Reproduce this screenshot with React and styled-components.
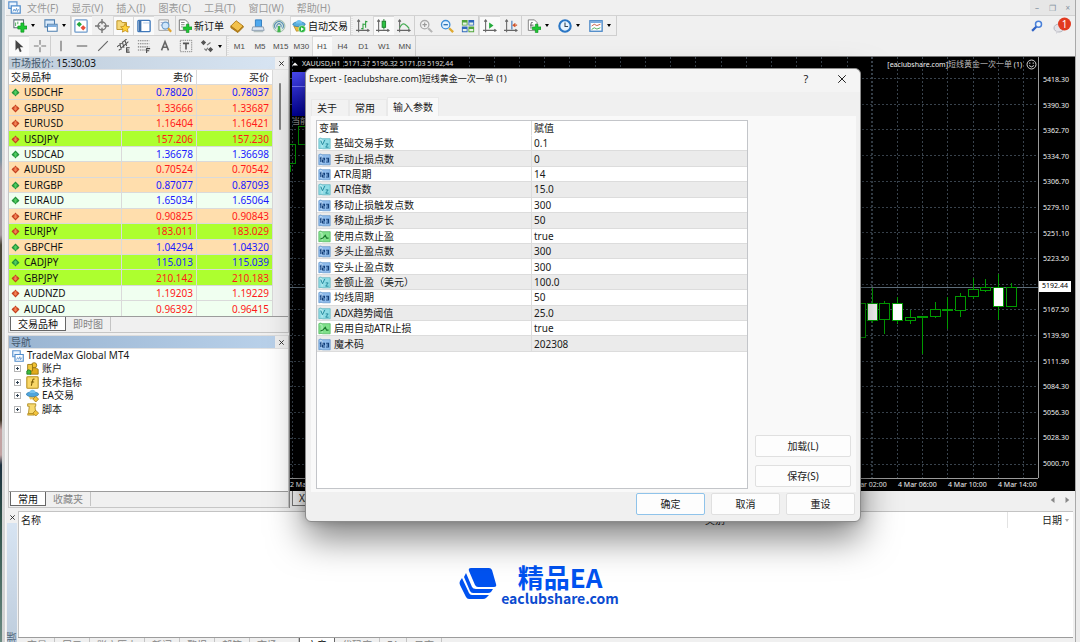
import React from "react";
import styled, { createGlobalStyle, css } from "styled-components";

const sans = `"Noto Sans", "Noto Sans CJK SC", sans-serif`;

const GlobalStyle = createGlobalStyle`
  * { box-sizing: border-box; }
  body { margin: 0; overflow: hidden; background: #f0f0f0; font: 10px/14px ${sans}; color: #1a1a1a; }
  button { appearance: none; margin: 0; padding: 0; border: 0; background: none; font: inherit; color: inherit; white-space: nowrap; }
  table { border-collapse: separate; border-spacing: 0; }
  svg { display: block; flex: none; }
`;

const Desktop = styled.div`
  display: grid;
  grid-template-columns: 2px 4px minmax(0, 1fr) 5px;
  min-height: 100vh;
`;
const Wallpaper = styled.div`
  background: linear-gradient(#7d95a3 0 160px, #a79aa2 170px 235px, #4a4638 245px 300px, #3d3526 420px, #c2a3a3 430px 455px, #1c3140 465px, #2f5148 520px, #6f8f86);
`;
const WindowEdge = styled.div`
  background: linear-gradient(#c9d5de, #dcdcdc 80px, #d2d2d2);
  border-right: 1px solid #f7f7f7;
`;
const RightEdge = styled.div`
  background: #ececec;
  border-left: 1px solid #a9a9a9;
`;
const Window = styled.div`
  min-width: 0;
  background: #f0f0f0;
`;

/* menu and tool bars */
const MenuBar = styled.nav`
  display: flex;
  align-items: center;
  gap: 13px;
  height: 16px;
  padding-left: 2px;
  border-bottom: 1px solid #d2d2d2;
  color: #999;
`;
const WindowControls = styled.div`
  display: flex;
  justify-content: space-around;
  width: 45px;
  height: 15px;
  margin-left: auto;
  background: #e6e6e6;
  color: #8593a2;
  font-size: 8px;
`;
const ToolRow = styled.div`
  display: flex;
  align-items: stretch;
  height: 20px;
  padding-left: 2px;
`;
const ToolStrip = styled.div`
  display: flex;
  border: solid #cfcfcf;
  border-width: 0 1px ${(p) => (p.$line ? "1px" : "0")} 0;
`;
const Group = styled.div`
  display: flex;
  width: ${(p) => p.$w}px;
  border-right: ${(p) => (p.$sep ? "1px solid #cfcfcf" : "0")};
`;
const Grip = styled.div`
  width: ${(p) => p.$w}px;
  background: repeating-linear-gradient(#e3e3e3 0 1px, #f4f4f4 1px 2px);
  border-left: 1px solid #cfcfcf;
`;
const ToolButton = styled.button`
  flex: 1 1 0;
  min-width: 0;
  display: flex;
  align-items: center;
  justify-content: center;
  gap: ${(p) => p.$gap || 3}px;
  color: #111;
  ${(p) => p.$on && css`background: #fafafa; box-shadow: inset 1px 1px #d9d9d9;`}
`;
const WideButton = styled(ToolButton)`
  flex: 0 0 ${(p) => p.$w}px;
`;
const Timeframe = styled(ToolButton)`
  font: 8px "Liberation Sans", sans-serif;
  color: #4a4a4a;
`;
const Caret = styled.span`
  border: solid transparent;
  border-width: 3px 2px 0;
  border-top-color: ${(p) => p.$color || "#000"};
`;
const ToolEnd = styled.div`
  display: flex;
  align-items: center;
  gap: 10px;
  margin-left: auto;
  padding-right: 3px;
`;

/* work space */
const Workspace = styled.div`
  display: grid;
  grid-template-columns: 283px minmax(0, 1fr);
`;
const SideColumn = styled.div`
  display: flex;
  flex-direction: column;
  gap: 2px;
  padding-left: 2px;
`;
const Panel = styled.section`
  display: flex;
  flex-direction: column;
  border: 1px solid #c6c6c6;
  border-top-color: #dcdcdc;
  padding-bottom: 1px;
`;
const PanelHead = styled.header`
  display: flex;
  align-items: center;
  height: 13px;
  border-bottom: 1px solid #e2e2e2;
`;
const PanelTitle = styled.div`
  flex: 1;
  height: 12px;
  padding-left: 2px;
  line-height: 12px;
  color: #44586c;
  background: ${(p) => (p.$active ? "linear-gradient(90deg, #99b4d1, #b9d1ea)" : "linear-gradient(90deg, #bfcddb, #d7e4f2)")};
  b { font-weight: 400; color: #111; }
`;
const CloseButton = styled.button`
  width: 13px;
  height: 12px;
  display: grid;
  place-items: center;
`;
const Scroller = styled.div`
  display: grid;
  grid-template-columns: minmax(0, 1fr) 15px;
  height: 246px;
  overflow: hidden;
`;
const ScrollTrack = styled.div`
  padding: 13px 6px;
  &::before { content: ""; display: block; width: 2px; height: 47px; border-radius: 1px; background: #858585; }
`;
const QuoteTable = styled.table`
  width: 100%;
  height: 247px;
  table-layout: fixed;
  line-height: 13px;
  background: #fff;
  th, td { padding: 1px 3px 0 2px; text-align: right; font-weight: 400; border-bottom: 1px solid #dadada; border-right: 1px solid #dadada; }
  th:first-child, td:first-child { text-align: left; width: 113px; }
  th:nth-child(2) { width: 75px; }
`;
const QuoteRow = styled.tr`
  background: ${(p) => p.$bg};
  td { color: ${(p) => (p.$up ? "#1a1aff" : "#ff1a1a")}; }
  td:first-child { color: #111; }
`;
const WithIcon = styled.span`
  display: flex;
  align-items: center;
  gap: ${(p) => p.$gap || 3}px;
`;
const TabStrip = styled.div`
  display: flex;
  height: 15px;
  padding-left: 1px;
  border-top: 1px solid #9c9c9c;
`;
const PanelTab = styled.button`
  height: 14px;
  padding: 0 7px;
  line-height: 12px;
  color: ${(p) => (p.$on ? "#111" : "#858585")};
  ${(p) => p.$on
    ? css`background: #fff; border: 1px solid #666; border-top: 0;`
    : css`border-right: 1px solid #c4c4c4;`}
`;
const Tree = styled.ul`
  display: flex;
  flex-direction: column;
  height: 142px;
  margin: 0;
  padding: 0 0 0 3px;
  background: #fff;
  line-height: 13px;
  list-style: none;
`;
const TreeItems = styled.ul`
  display: grid;
  grid-auto-rows: 1fr;
  height: 54px;
  margin: 0;
  padding: 0 0 0 2px;
  list-style: none;
`;
const Expander = styled.button`
  width: 7px;
  height: 7px;
  margin-right: 2px;
  border: 1px solid #b5b5b5;
  background: linear-gradient(#345, #345) center / 3px 1px no-repeat, linear-gradient(#345, #345) center / 1px 3px no-repeat, #fff;
`;

/* chart */
const ChartColumn = styled.div`
  min-width: 0;
  border-left: 1px solid #8b8b8b;
`;
const ChartPane = styled.div`
  position: relative;
  display: grid;
  grid-template-columns: minmax(0, 1fr) 37px;
  grid-template-rows: 421px 13px;
  background: #000;
  border-top: 1px solid #777;
  color: #f0f0f0;
  font-size: 7px;
  line-height: 10px;
`;
const ChartSvg = styled.svg`
  grid-area: 1 / 1;
  width: 100%;
  height: 421px;
`;
const ChartHead = styled.div`
  grid-area: 1 / 1;
  display: flex;
  align-items: center;
  gap: 4px;
  height: 14px;
  padding: 0 1px 0 2px;
  white-space: pre;
  z-index: 1;
  span:last-of-type { margin-left: auto; }
  small { font-size: 8px; color: #bbb; }
`;
const PriceAxis = styled.div`
  display: flex;
  flex-direction: column;
  justify-content: space-between;
  padding: 18px 0 9px 4px;
  border-left: 1px solid #9a9a9a;
`;
const PriceBadge = styled.div`
  position: absolute;
  right: 4px;
  top: 224px;
  width: 32px;
  height: 11px;
  padding-left: 3px;
  background: #fff;
  color: #000;
`;
const TimeAxis = styled.div`
  display: flex;
  justify-content: flex-end;
  border-top: 1px solid #9a9a9a;
  line-height: 12px;
  white-space: nowrap;
  span { flex: 0 0 50px; }
  span:first-child { margin-right: auto; }
  span:last-child { flex-basis: 40px; }
`;
const ChartTabs = styled.div`
  display: flex;
  height: 17px;
  padding-left: 2px;
`;
const ChartTab = styled.button`
  height: 15px;
  padding: 0 6px;
  background: #fafafa;
  border: 1px solid #777;
  border-top: 0;
`;
const TabArrows = styled.div`
  display: flex;
  gap: 8px;
  margin-left: auto;
  padding-right: 5px;
`;

/* terminal */
const Terminal = styled.section`
  display: grid;
  grid-template-columns: 12px minmax(0, 1fr);
  padding: 3px 2px 0 0;
`;
const TerminalSide = styled.div`
  display: flex;
  flex-direction: column;
`;
const TerminalTitle = styled.div`
  flex: 1;
  width: 10px;
  margin-left: 1px;
  writing-mode: vertical-rl;
  transform: rotate(180deg);
  line-height: 10px;
  color: #53687c;
  background: linear-gradient(#bccbdb, #d7e4f2);
`;
const Articles = styled.div`
  height: 126px;
  background: #fff;
  border: solid #c3c3c3;
  border-width: 1px 0 0 1px;
`;
const ArticleHead = styled.div`
  display: grid;
  grid-template-columns: 684px minmax(0, 1fr) 66px;
  height: 16px;
  padding-left: 2px;
  line-height: 16px;
`;
const DateHead = styled.span`
  display: flex;
  justify-content: flex-end;
  align-items: center;
  gap: 3px;
  padding-right: 4px;
  border-left: 1px solid #e3e3e3;
`;
const Brand = styled.div`
  display: flex;
  align-items: center;
  justify-content: center;
  gap: 4px;
  margin: 35px 14px 0 0;
  color: #0052f0;
  font-family: "Noto Sans CJK SC", sans-serif;
  font-weight: 700;
  text-align: center;
`;
const BrandName = styled.div`
  font-size: 26px;
  line-height: 28px;
`;
const BrandSite = styled.div`
  font-size: 14px;
  line-height: 14px;
  color: #0b4bd0;
`;
const TerminalTabs = styled(TabStrip)`
  padding-left: 2px;
`;
const TerminalTab = styled(PanelTab)`
  padding-right: ${(p) => (p.$wide ? 21 : 7)}px;
`;

/* dialog */
const Dialog = styled.div`
  position: absolute;
  left: 305px;
  top: 68px;
  width: 556px;
  border: 1px solid #8c8c8c;
  border-radius: 6px;
  background: #f0f0f0;
  box-shadow: 0 16px 36px rgba(0, 0, 0, 0.5), 0 0 8px rgba(0, 0, 0, 0.2);
  z-index: 5;
`;
const DialogHead = styled.header`
  display: flex;
  align-items: center;
  height: 23px;
  padding: 0 0 3px 3px;
  border-radius: 6px 6px 0 0;
  background: #f4f4f4;
  font-size: 9px;
  h1 { flex: 1; margin: 0; font: inherit; }
  button { width: 36px; height: 20px; display: grid; place-items: center; font-size: 11px; }
`;
const DialogTabs = styled.div`
  display: flex;
  align-items: flex-end;
  height: 24px;
  padding-left: 5px;
`;
const DialogTab = styled.button`
  height: ${(p) => (p.$on ? 19 : 17)}px;
  padding: 0 ${(p) => (p.$on ? 5 : 11)}px 0 5px;
  border: 1px solid #e9e9e9;
  border-bottom: 0;
  background: ${(p) => (p.$on ? "#f9f9f9" : "#f2f2f2")};
`;
const DialogPage = styled.div`
  display: grid;
  grid-template-columns: minmax(0, 1fr) 96px;
  gap: 7px;
  margin: 0 4px 0 5px;
  padding: 4px 5px 3px;
  background: #f9f9f9;
`;
const InputList = styled.div`
  height: 369px;
  background: #fff;
  border: 1px solid #c3c5c9;
`;
const InputTable = styled.table`
  width: 100%;
  height: 231px;
  table-layout: fixed;
  line-height: 13px;
  th, td { padding: 1px 2px 0 1px; text-align: left; font-weight: 400; border-bottom: 1px solid #dcdcdc; border-right: 1px solid #dcdcdc; }
  th { border-bottom-color: #fff; padding-left: 2px; }
  th:first-child { width: 215px; }
  td:last-child, th:last-child { border-right: 0; padding-left: 2px; }
  tbody tr:nth-child(even) { background: #ebebeb; }
`;
const SideButtons = styled.div`
  display: flex;
  flex-direction: column;
  justify-content: flex-end;
  gap: 8px;
  padding-bottom: 2px;
`;
const PushButton = styled.button`
  min-width: 69px;
  height: 22px;
  border: 1px solid ${(p) => (p.$main ? "#8fc3ea" : "#e0e0e0")};
  border-radius: 2px;
  background: #fdfdfd;
`;
const DialogFoot = styled.footer`
  display: flex;
  justify-content: flex-end;
  gap: 6px;
  padding: 1px 5px 6px;
`;

/* icons: one 16 by 16 drawing each */
const plus = <path d="M8.5 6h3v3h3v3h-3v3h-3v-3h-3V9h3z" fill="#1cc832" stroke="#0b8a1c" strokeWidth=".8" />;
const axes = <path d="M3 1v14M0 13h15M1.500 3 3 1l1.500 2M13 11.500l2 1.500-2 1.500" fill="none" stroke="#666" strokeWidth="1.200" />;
const sheet = (c, d) => (
  <>
    <path d="M1 2q2-1.500 4 0h10v12.500H6q-2-1-5 0z" fill={c} stroke={d} strokeWidth=".8" />
    <path d="M2 3.500q2-1 3 .5v9" fill="none" stroke="#fff" opacity=".6" />
  </>
);
const art = {
  app: <><path d="M1 1h10v8H1z" fill="#eaf4ff" stroke="#5b93cf" strokeWidth="1.500" /><path d="M4 6h11v9H4z" fill="#fff" stroke="#4d8bcb" strokeWidth="1.500" /><path d="M6 13l1.500-3 1.500 2.500L10.500 9l1 4 1.500-3" fill="none" stroke="#4d8bcb" /></>,
  newChart: <><path d="M1 1h11v9H1z" fill="#fff" stroke="#5e6f7a" strokeWidth="1.200" /><path d="M3 4v4M5.500 3v3" stroke="#3aa04a" /><path d="M9 4.500h3.500V8H16v3.500h-3.500V15H9v-3.500H5.500V8H9z" fill="#1cc832" stroke="#0b8a1c" strokeWidth=".7" /></>,
  profiles: <><path d="M1 1h11v8H1z" fill="#dcebfa" stroke="#4d7fb0" strokeWidth="1.200" /><path d="M4 6h11v8H4z" fill="#fff" stroke="#4d7fb0" strokeWidth="1.200" /><path d="M4.500 7h10v2h-10z" fill="#6fa5dc" /></>,
  market: <><rect x="1" y="1" width="14" height="14" rx="1" fill="#fff" stroke="#6e9bcb" strokeWidth="1.500" /><path d="M6 3l3 3-3 3-3-3z" fill="#22a83c" /><path d="M10.500 7l3 3-3 3-3-3z" fill="#e8503a" /></>,
  target: <><circle cx="8" cy="8" r="4.500" fill="none" stroke="#777" strokeWidth="1.600" /><path d="M8 0v6M8 10v6M0 8h6M10 8h6" stroke="#777" strokeWidth="1.600" /></>,
  favourites: <><path d="M1 2h5l1 2h5v8H1z" fill="#f5d87a" stroke="#b98d1c" /><path d="M10.500 5l1.600 3.400 3.600.5-2.600 2.500.7 3.600-3.300-1.700-3.200 1.700.6-3.600-2.600-2.500 3.700-.5z" fill="#ffd23a" stroke="#b98211" strokeWidth=".8" /></>,
  navigator: <><rect x="1" y="1.500" width="14" height="13" rx="1" fill="#fff" stroke="#3f78ba" strokeWidth="1.500" /><path d="M2 2h3v12H2z" fill="#3b6ea8" /><path d="M7 4.500h7" stroke="#a9c6e6" /></>,
  tester: <><path d="M1 1h11v12H1z" fill="#f7f7f7" stroke="#999" /><path d="M3 4h6M3 7h4" stroke="#aac" /><circle cx="8.500" cy="7.500" r="4" fill="#cfe6fb" stroke="#6d9cc9" strokeWidth="1.300" /><path d="M11.500 10.500l3.500 4" stroke="#e0a32e" strokeWidth="2.400" /></>,
  order: <><path d="M1.500 1h7l3 3v9h-10z" fill="#fff" stroke="#666" /><path d="M3.500 4h4M3.500 6.500h4M3.500 9h2" stroke="#777" /><path d="M9.500 6h3v3H16v3h-3.500v3.500h-3V12H6V9h3.500z" fill="#1cc832" stroke="#0b8a1c" strokeWidth=".7" /></>,
  book: <><path d="M1 8v2l8 5.500 6-6V8l-6 6z" fill="#c8871a" stroke="#a0700f" /><path d="M1 8l6-6 8 6-6 6z" fill="#f2c14b" stroke="#a97513" /></>,
  hosting: <><path d="M5 1h7v8H5z" fill="#4fa9ee" stroke="#2878bd" /><path d="M2 9h12l1 4H1z" fill="#dde7f2" stroke="#8799ad" /><path d="M3 14.500h11" stroke="#9aa" /></>,
  signal: <><circle cx="8" cy="8" r="6.800" fill="#dceadf" stroke="#9db8a6" /><path d="M4 11a5 5 0 1 1 8 0M6 9.500a2.500 2.500 0 1 1 4 0" fill="none" stroke="#5b8fb5" strokeWidth="1.300" /><path d="M7 8h2l1 7H6z" fill="#43b54d" /></>,
  auto: <><path d="M2 8l3 6 7-1 2-6z" fill="#e9b93d" stroke="#a87d18" strokeWidth=".7" /><ellipse cx="8" cy="6" rx="7" ry="2.800" fill="#58aede" stroke="#2b78ac" strokeWidth=".8" /><path d="M4.500 5q0-4 3.500-4t3.500 4z" fill="#75c2ee" /><circle cx="11.500" cy="11.500" r="4" fill="#25b53b" stroke="#fff" strokeWidth=".6" /><path d="M10.300 9.300v4.400l3.400-2.200z" fill="#fff" /></>,
  bars: <>{axes}<path d="M8 5v7M6 11h2M11 2v8M11 3h2M8 6h3" stroke="#2b9e3c" strokeWidth="1.200" /></>,
  candles: <>{axes}<path d="M9 0v12" stroke="#197b27" /><rect x="7" y="2.500" width="4" height="7" fill="#2cc343" stroke="#197b27" /></>,
  line: <>{axes}<path d="M3 10q3-6 6-4t5 5" fill="none" stroke="#45ab53" strokeWidth="1.300" /></>,
  zoomIn: <><circle cx="6.500" cy="6.500" r="4.800" fill="#f1f1f1" stroke="#aaa" strokeWidth="1.500" /><path d="M4 6.500h5M6.500 4v5" stroke="#999" strokeWidth="1.300" /><path d="M10.500 10.500l4.500 4.500" stroke="#b5b5b5" strokeWidth="2.400" /></>,
  zoomOut: <><circle cx="6.500" cy="6.500" r="4.800" fill="#e2f2ff" stroke="#3d8ed6" strokeWidth="1.500" /><path d="M4 6.500h5" stroke="#2a70b0" strokeWidth="1.500" /><path d="M10.500 10.500l4.500 4.500" stroke="#dfa92f" strokeWidth="2.600" /></>,
  tile: <><path d="M1 1h6.500v6.500H1zM8.500 8.500H15V15H8.500z" fill="#4fa43a" /><path d="M8.500 1H15v6.500H8.500zM1 8.500h6.500V15H1z" fill="#2f67bd" /><path d="M2 4h4.500v2.500H2zM9.500 4H14v2.500H9.500zM2 11.500h4.500V14H2zM9.500 11.500H14V14H9.500z" fill="#e6f2e6" /></>,
  scroll: <>{axes}<path d="M7 4v7l5-3.500z" fill="#25ab3c" /></>,
  shift: <>{axes}<path d="M9 2v10" stroke="#3f78ba" strokeWidth="1.300" /><path d="M15 7h-4M13 5l-2.500 2L13 9" fill="none" stroke="#d0542a" strokeWidth="1.400" /></>,
  indicator: <><path d="M1.500 1h7l3 3v9h-10z" fill="#fff" stroke="#777" /><path d="M6.500 4q-2-1-2 2v5M3.500 7h4" fill="none" stroke="#555" /><path d="M9.500 6h3v3H16v3h-3.500v3.500h-3V12H6V9h3.500z" fill="#1cc832" stroke="#0b8a1c" strokeWidth=".7" /></>,
  clock: <><circle cx="8" cy="8" r="6.500" fill="#e8f4ff" stroke="#2a76c4" strokeWidth="2.400" /><path d="M8 4v4.500h3.500" fill="none" stroke="#345" strokeWidth="1.200" /></>,
  template: <><rect x="1" y="2" width="14" height="12" fill="#fff" stroke="#4785c6" strokeWidth="1.500" /><path d="M1.500 2.500h13v2h-13z" fill="#6fa5dc" /><path d="M3 8l3-2 3 1.500L13 6" fill="none" stroke="#c0503a" /><path d="M3 12l3-2 3 1.500L13 10" fill="none" stroke="#3ca34c" /></>,
  cursor: <path d="M4 1v12l3-3 2 5 2-1-2-4.500h4z" fill="#444" />,
  cross: <path d="M8 1v5.500M8 9.500V15M1 8h5.500M9.500 8H15" stroke="#777" strokeWidth="1.300" />,
  vline: <path d="M8 2v12" stroke="#666" strokeWidth="1.300" />,
  hline: <path d="M2 8h12" stroke="#666" strokeWidth="1.300" />,
  trend: <path d="M2.500 13.500l11-11" stroke="#666" strokeWidth="1.300" />,
  channel: <><path d="M0 9L11 0M2 13L13 3M3 5l2 7M6 3l2 7M9 1l2 7" stroke="#555" strokeWidth="1.200" /><path d="M14.500 10H11v5h3.500M11 12.500h3" fill="none" stroke="#444" strokeWidth="1.200" /></>,
  fib: <><path d="M1 2h13M1 5.500h13M1 9h13M1 12.500h9" stroke="#777" strokeDasharray="1.500 1" strokeWidth="1.200" /><path d="M11 16v-5h4M11 13.500h3" fill="none" stroke="#444" strokeWidth="1.200" /></>,
  letter: <path d="M4 13L8 3l4 10M5.500 9.500h5" fill="none" stroke="#666" strokeWidth="1.800" />,
  label: <><rect x="1.500" y="1.500" width="13" height="13" fill="none" stroke="#777" strokeDasharray="1.500 1" /><path d="M4.500 5h7M8 5v7" stroke="#555" strokeWidth="1.800" /></>,
  arrows: <><path d="M4 1l3 3-3 3-3-3zM12 9l3 3-3 3-3-3z" fill="#555" /><path d="M5 11l2 2 2-3M8 7l4-3" fill="none" stroke="#777" strokeWidth="1.400" /></>,
  up: <><path d="M8 1l7 7-3 3.500H11L8 15l-3-3.500H4L1 8z" fill="#23913a" /><path d="M8 4l4 4H9.800v4H6.200V8H4z" fill="#52d162" /></>,
  down: <><path d="M8 15l7-7-3-3.500H11L8 1 5 4.500H4L1 8z" fill="#c4401f" /><path d="M8 12l4-4H9.800V4H6.200v4H4z" fill="#f58556" /></>,
  accounts: <><circle cx="10" cy="4" r="3.200" fill="#f1c232" stroke="#94700c" /><path d="M5 15V9q5-4 10 0v6z" fill="#e0ab1c" stroke="#94700c" /><path d="M2 3h6v8H2z" fill="#f0c840" stroke="#94700c" /><path d="M1 15v-4q2-3 5 0v4z" fill="#3bbb3f" stroke="#237a27" /></>,
  fx: <><rect x="1" y="1" width="14" height="14" rx="1" fill="#f9d767" stroke="#b68f1c" strokeWidth="1.300" /><path d="M10.500 4q-2-1-2.500 2l-1.500 6M6 7.500h4" fill="none" stroke="#7b5c06" strokeWidth="1.300" /></>,
  expert: <><path d="M3 8l2 5 6-1 2-5z" fill="#e9c25a" /><ellipse cx="8" cy="6.500" rx="7.500" ry="3" fill="#4fa5dc" stroke="#2b78ac" strokeWidth=".8" /><path d="M4.500 5q0-4 3.500-4t3.500 4z" fill="#75c2ee" /><path d="M12 9l3.500 3.500L12 16l-3.500-3.500z" fill="#f3c53c" stroke="#a87d18" /></>,
  script: <><path d="M2 1h10v3h-1l1 9H3l1-9H2z" fill="#f7d970" stroke="#a98519" /><path d="M2 13h8v2H2z" fill="#e9bc40" stroke="#a98519" strokeWidth=".7" /><path d="M12 9l3.500 3.500L12 16l-3.500-3.500z" fill="#f3c53c" stroke="#a87d18" /></>,
  int: <>{sheet("#8fbcec", "#5a8fc7")}<path d="M2.500 7l1-1v5M5.500 6.500h2.500v2H5.500v2.500H8.500M10 6.500h3v4.500h-3M10.500 8.700H13" fill="none" stroke="#123e78" strokeWidth="1.300" /></>,
  double: <>{sheet("#8edce5", "#54aebb")}<path d="M3.500 4.500l2 5 3-6M9.500 8.500h3l-3 4h3.500" fill="none" stroke="#258a9d" strokeWidth="1.200" /></>,
  bool: <>{sheet("#7fe08a", "#46ae54")}<path d="M3 11l3-1 3-3.500 1.500 3.500H13" fill="none" stroke="#18752a" strokeWidth="1.400" /></>,
  search: <><circle cx="10" cy="5.500" r="4" fill="#eef6ff" stroke="#4a80d8" strokeWidth="2" /><path d="M7 9l-5.500 5.500" stroke="#2f62c4" strokeWidth="3" /></>,
  x: <path d="M3 3l10 10M13 3L3 13" stroke="#222" strokeWidth="2" fill="none" />,
  bigX: <path d="M2 2l12 12M14 2L2 14" stroke="#222" strokeWidth="1.600" fill="none" />,
  tri: <path d="M0 12L8 4l8 8z" fill="#fff" />,
  left: <path d="M12 0v16L2 8z" fill="#888" />,
  right: <path d="M4 0v16l10-8z" fill="#888" />,
  face: <><circle cx="8" cy="8" r="6.500" fill="none" stroke="#ddd" strokeWidth="1.400" /><path d="M5.500 5v2M10.500 5v2M4.500 9.500q3.500 4 7 0" fill="none" stroke="#ddd" strokeWidth="1.400" /></>,
};
const Icon = ({ name, size = 14 }) => (
  <svg width={size} height={size} viewBox="0 0 16 16" aria-hidden="true">{art[name]}</svg>
);
const ChatIcon = () => (
  <svg width="19" height="18" viewBox="0 0 19 18" aria-hidden="true">
    <ellipse cx="6" cy="11" rx="5" ry="4" fill="#e3e3e8" stroke="#b5b5bd" />
    <path d="M3 14v3l3-2.500" fill="#d5d5dc" />
    <circle cx="11.500" cy="7" r="6.500" fill="#e23a20" />
    <text x="11.500" y="10.500" textAnchor="middle" fontSize="10" fill="#fff">1</text>
  </svg>
);

const menus = ["文件(F)", "显示(V)", "插入(I)", "图表(C)", "工具(T)", "窗口(W)", "帮助(H)"];
const timeframes = ["M1", "M5", "M15", "M30", "H1", "H4", "D1", "W1", "MN"];

const peach = "#ffdead";
const lime = "#adff2f";
const mint = "#f0fff0";
const quotes = [
  ["USDCHF", "0.78020", "0.78037", 1, peach],
  ["GBPUSD", "1.33666", "1.33687", 0, peach],
  ["EURUSD", "1.16404", "1.16421", 0, peach],
  ["USDJPY", "157.206", "157.230", 0, lime],
  ["USDCAD", "1.36678", "1.36698", 1, mint],
  ["AUDUSD", "0.70524", "0.70542", 0, peach],
  ["EURGBP", "0.87077", "0.87093", 1, peach],
  ["EURAUD", "1.65034", "1.65064", 1, mint],
  ["EURCHF", "0.90825", "0.90843", 0, peach],
  ["EURJPY", "183.011", "183.029", 0, lime],
  ["GBPCHF", "1.04294", "1.04320", 1, peach],
  ["CADJPY", "115.013", "115.039", 1, lime],
  ["GBPJPY", "210.142", "210.183", 0, lime],
  ["AUDNZD", "1.19203", "1.19229", 0, mint],
  ["AUDCAD", "0.96392", "0.96415", 0, mint],
];
const treeItems = [["accounts", "账户"], ["fx", "技术指标"], ["expert", "EA交易"], ["script", "脚本"]];
const inputs = [
  ["double", "基础交易手数", "0.1"],
  ["int", "手动止损点数", "0"],
  ["int", "ATR周期", "14"],
  ["double", "ATR倍数", "15.0"],
  ["int", "移动止损触发点数", "300"],
  ["int", "移动止损步长", "50"],
  ["bool", "使用点数止盈", "true"],
  ["int", "多头止盈点数", "300"],
  ["int", "空头止盈点数", "300"],
  ["double", "金额止盈（美元）", "100.0"],
  ["int", "均线周期", "50"],
  ["double", "ADX趋势阈值", "25.0"],
  ["bool", "启用自动ATR止损", "true"],
  ["int", "魔术码", "202308"],
];
const prices = ["5418.30", "5390.30", "5362.70", "5334.70", "5306.70", "5279.10", "5251.10", "5223.50", "5195.10", "5167.50", "5139.90", "5111.90", "5084.30", "5056.30", "5028.30", "5000.70"];
const terminalTabs = ["交易", "展示", "账户历史", "新闻", "警报", "邮箱", "市场", "文章", "代码库", "EA", "日志"];

/* candles: x, wick top, body top, body bottom, wick bottom, filled */
const candles = [
  [860, 303, 303, 337, 337, 0],
  [872, 288, 303, 320, 323, 1],
  [884, 301, 303, 319, 334, 0],
  [897, 297, 303, 320, 324, 1],
  [910, 310, 317, 320, 324, 0],
  [922, 316, 316, 317, 354, 0],
  [935, 302, 309, 316, 318, 0],
  [947, 297, 309, 310, 329, 0],
  [960, 293, 296, 310, 317, 0],
  [973, 278, 289, 296, 299, 0],
  [985, 279, 287, 290, 292, 0],
  [998, 274, 287, 306, 320, 1],
  [1011, 283, 287, 306, 307, 0],
];

function Chart() {
  const columns = Array.from({ length: 30 }, (_, i) => Math.round(1023 - i * 25.2));
  const rows = prices.map((_, i) => Math.round(79 + i * 25.7));
  return (
    <ChartSvg viewBox="290 57 748 421" preserveAspectRatio="xMaxYMin meet" shapeRendering="crispEdges">
      <g stroke="#39434d" strokeDasharray="2 2">
        {columns.map((x) => <path key={x} d={`M${x + 0.5} 57V478`} />)}
        {rows.map((y) => <path key={y} d={`M290 ${y - 0.5}H1038`} />)}
        <path d="M871.500 57V478" />
      </g>
      <path d="M290 287.500H1038" stroke="#5d6d7a" />
      <g stroke="#009a00" fill="#000">
        <path d="M290 144.500h5.500v19H290M290.500 165v7M306 126.500h-7.500v18h7" fill="none" />
        {candles.map(([x, wt, bt, bb, wb, filled]) => (
          <g key={x}>
            <path d={`M${x + 0.5} ${wt}V${wb}`} />
            <rect x={x - 4.5} y={bt + 0.5} width="10" height={bb - bt} fill={filled ? "#fff" : "#000"} />
          </g>
        ))}
      </g>
      <defs>
        <linearGradient id="sell" x2="0" y2="1"><stop stopColor="#4a4af0" /><stop offset="1" stopColor="#0000a0" /></linearGradient>
      </defs>
      <rect x="292" y="72" width="40" height="44" fill="url(#sell)" />
      <path d="M292 86.500h40" stroke="#7c7cff" />
      <text x="292" y="124" fontSize="8" fill="#bbb">当前</text>
    </ChartSvg>
  );
}

function Drop({ name, label }) {
  return <ToolButton aria-label={label} $gap={4}><Icon name={name} /><Caret /></ToolButton>;
}
function Tools({ names, on = [] }) {
  return names.map((n) => <ToolButton key={n} aria-label={n} $on={on.includes(n)}><Icon name={n} /></ToolButton>);
}

function Toolbars() {
  return (
    <>
      <ToolRow>
        <ToolStrip $line>
          <Group $w={63} $sep><Drop name="newChart" label="新图表" /><Drop name="profiles" label="配置" /></Group>
          <Group $w={105} $sep><Tools names={["market", "target", "favourites", "navigator", "tester"]} on={["market", "favourites", "navigator"]} /></Group>
          <Group $w={174}>
            <WideButton $w={50} $gap={2}><Icon name="order" />新订单</WideButton>
            <Tools names={["book", "hosting", "signal"]} />
            <WideButton $w={60} $gap={2} $on><Icon name="auto" />自动交易</WideButton>
          </Group>
          <Grip $w={3} />
          <Group $w={62} $sep><Tools names={["bars", "candles", "line"]} on={["candles"]} /></Group>
          <Group $w={64} $sep><Tools names={["zoomIn", "zoomOut", "tile"]} /></Group>
          <Group $w={43} $sep><Tools names={["scroll", "shift"]} on={["scroll"]} /></Group>
          <Group $w={94}><Drop name="indicator" label="指标" /><Drop name="clock" label="周期" /><Drop name="template" label="模板" /></Group>
        </ToolStrip>
        <ToolEnd><Icon name="search" size={12} /><ChatIcon /></ToolEnd>
      </ToolRow>
      <ToolRow>
        <ToolStrip>
          <Group $w={43} $sep><Tools names={["cursor", "cross"]} on={["cursor"]} /></Group>
          <Group $w={145}><Tools names={["vline", "hline", "trend", "channel", "fib", "letter", "label"]} /></Group>
          <Group $w={30}><Drop name="arrows" label="箭头" /></Group>
          <Grip $w={3} />
          <Group $w={186}>{timeframes.map((t) => <Timeframe key={t} $on={t === "H1"}>{t}</Timeframe>)}</Group>
        </ToolStrip>
      </ToolRow>
    </>
  );
}

function MarketWatch() {
  return (
    <Panel>
      <PanelHead><PanelTitle>市场报价: <b>15:30:03</b></PanelTitle><CloseButton aria-label="关闭"><Icon name="x" size={7} /></CloseButton></PanelHead>
      <Scroller>
        <QuoteTable>
          <thead><tr><th>交易品种</th><th>卖价</th><th>买价</th></tr></thead>
          <tbody>
            {quotes.map(([s, bid, ask, up, bg]) => (
              <QuoteRow key={s} $bg={bg} $up={up}>
                <td><WithIcon $gap={4}><Icon name={up ? "up" : "down"} size={9} />{s}</WithIcon></td><td>{bid}</td><td>{ask}</td>
              </QuoteRow>
            ))}
          </tbody>
        </QuoteTable>
        <ScrollTrack />
      </Scroller>
      <TabStrip><PanelTab $on>交易品种</PanelTab><PanelTab>即时图</PanelTab></TabStrip>
    </Panel>
  );
}

function Navigator() {
  return (
    <Panel>
      <PanelHead><PanelTitle $active>导航</PanelTitle><CloseButton aria-label="关闭"><Icon name="x" size={7} /></CloseButton></PanelHead>
      <Tree>
        <li>
          <WithIcon><Icon name="app" size={12} />TradeMax Global MT4</WithIcon>
          <TreeItems>
            {treeItems.map(([icon, text]) => (
              <li key={text}><WithIcon><Expander aria-label={`展开${text}`} /><Icon name={icon} size={13} />{text}</WithIcon></li>
            ))}
          </TreeItems>
        </li>
      </Tree>
      <TabStrip><PanelTab $on>常用</PanelTab><PanelTab>收藏夹</PanelTab></TabStrip>
    </Panel>
  );
}

function ExpertDialog() {
  return (
    <Dialog role="dialog" aria-labelledby="expert-title">
      <DialogHead>
        <h1 id="expert-title">Expert - [eaclubshare.com]短线黄金一次一单 (1)</h1>
        <button aria-label="帮助">?</button>
        <button aria-label="关闭"><Icon name="bigX" size={10} /></button>
      </DialogHead>
      <DialogTabs><DialogTab>关于</DialogTab><DialogTab>常用</DialogTab><DialogTab $on>输入参数</DialogTab></DialogTabs>
      <DialogPage>
        <InputList>
          <InputTable>
            <thead><tr><th>变量</th><th>赋值</th></tr></thead>
            <tbody>
              {inputs.map(([type, name, value]) => (
                <tr key={name}><td><WithIcon><Icon name={type} size={13} />{name}</WithIcon></td><td>{value}</td></tr>
              ))}
            </tbody>
          </InputTable>
        </InputList>
        <SideButtons><PushButton>加载(L)</PushButton><PushButton>保存(S)</PushButton></SideButtons>
      </DialogPage>
      <DialogFoot><PushButton $main>确定</PushButton><PushButton>取消</PushButton><PushButton>重设</PushButton></DialogFoot>
    </Dialog>
  );
}

export default function App() {
  return (
    <>
      <GlobalStyle />
      <Desktop>
        <Wallpaper />
        <WindowEdge />
        <Window>
          <MenuBar>
            <WithIcon $gap={6}><Icon name="app" size={13} /><button>{menus[0]}</button></WithIcon>
            {menus.slice(1).map((m) => <button key={m}>{m}</button>)}
            <WindowControls><button aria-label="最小化">–</button><button aria-label="还原">❐</button><button aria-label="关闭">×</button></WindowControls>
          </MenuBar>
          <Toolbars />
          <Workspace>
            <SideColumn><MarketWatch /><Navigator /></SideColumn>
            <ChartColumn>
              <ChartPane>
                <Chart />
                <ChartHead>
                  <Icon name="tri" size={6} />
                  <span>XAUUSD,H1  5171.37 5196.32 5171.03 5192.44</span>
                  <span>[eaclubshare.com]<small>短线黄金一次一单</small> (1)</span>
                  <Icon name="face" size={11} />
                </ChartHead>
                <PriceAxis>{prices.map((p) => <span key={p}>{p}</span>)}</PriceAxis>
                <PriceBadge>5192.44</PriceBadge>
                <TimeAxis><span>2 Mar 2026</span><span>4 Mar 02:00</span><span>4 Mar 06:00</span><span>4 Mar 10:00</span><span>4 Mar 14:00</span></TimeAxis>
              </ChartPane>
              <ChartTabs>
                <ChartTab>XAUUSD,H1</ChartTab>
                <TabArrows>
                  <button aria-label="向左"><Icon name="left" size={6} /></button>
                  <button aria-label="向右"><Icon name="right" size={6} /></button>
                </TabArrows>
              </ChartTabs>
            </ChartColumn>
          </Workspace>
          <Terminal>
            <TerminalSide>
              <CloseButton aria-label="关闭"><Icon name="x" size={7} /></CloseButton>
              <TerminalTitle>终端</TerminalTitle>
            </TerminalSide>
            <div>
              <Articles>
                <ArticleHead><span>名称</span><span>类别</span><DateHead>日期 <Caret $color="#aaa" /></DateHead></ArticleHead>
                <Brand>
                  <svg width="38" height="32" viewBox="0 0 38 32" aria-hidden="true" fill="#0052f0">
                    <path d="M12 0h18q2 0 3 2l4 14q1 3-2 3H19q-2 0-3-2L10 3q-1-3 2-3z" />
                    <path d="M7 5l6 14q1 2 4 2h17l-2 3q-1 1-3 1H14q-2 0-3-2L5 9z" />
                    <path d="M3 10l7 15q1 2 3 2h17l-3 3q-1 1-3 1H10q-2 0-3-2L1 17q-1-2 0-4z" />
                  </svg>
                  <div><BrandName>精品EA</BrandName><BrandSite>eaclubshare.com</BrandSite></div>
                </Brand>
              </Articles>
              <TerminalTabs>{terminalTabs.map((t) => <TerminalTab key={t} $on={t === "文章"} $wide={t === "市场"}>{t}</TerminalTab>)}</TerminalTabs>
            </div>
          </Terminal>
        </Window>
        <RightEdge />
      </Desktop>
      <ExpertDialog />
    </>
  );
}
